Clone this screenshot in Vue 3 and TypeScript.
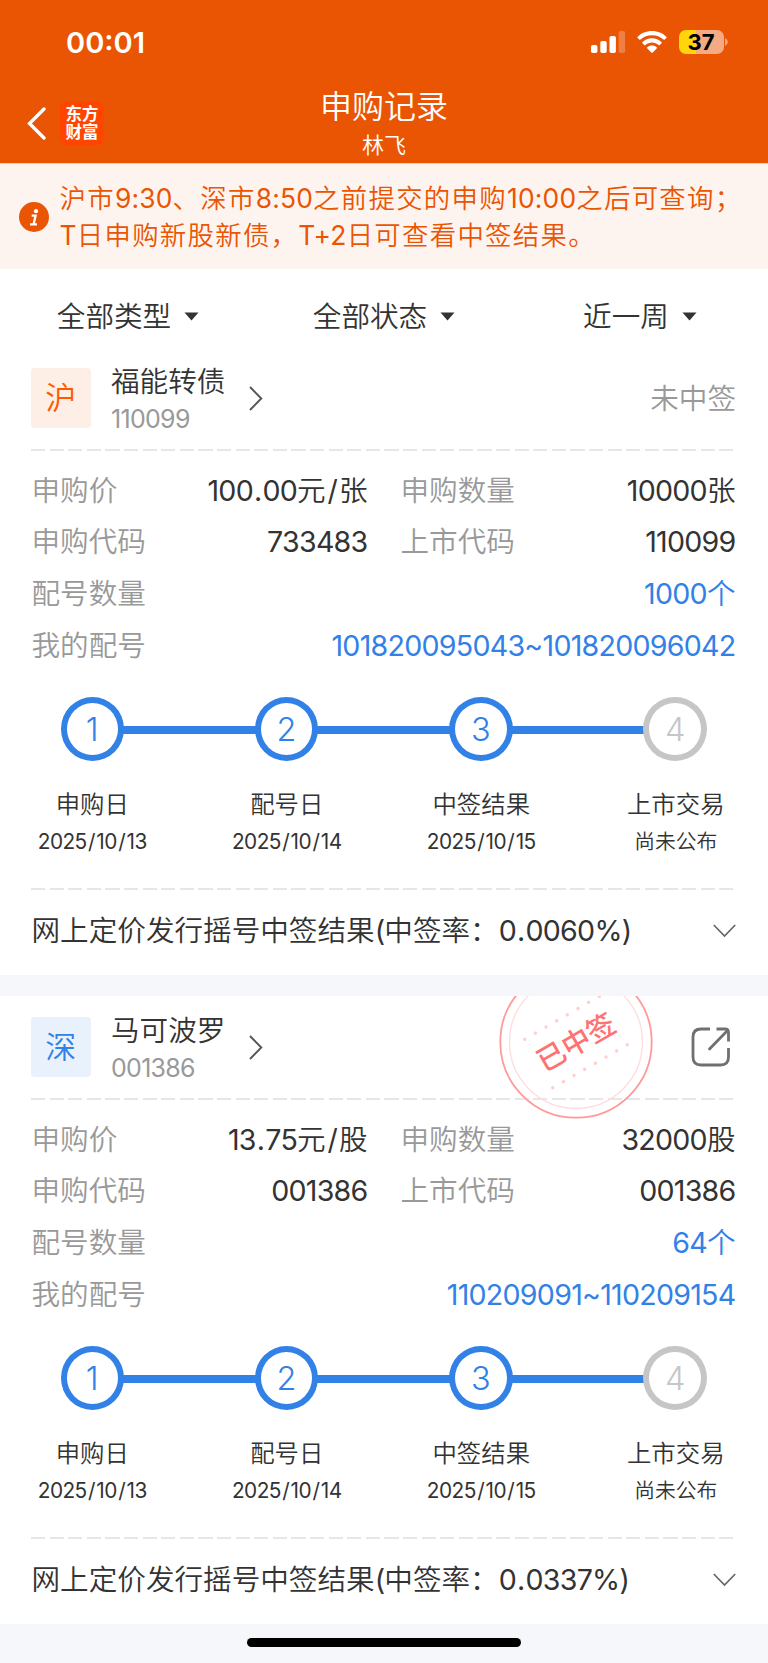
<script setup lang="ts">
import { h, type FunctionalComponent } from 'vue'

interface Step {
  label: string
  date: string
  done: boolean
}

interface RecordItem {
  market: string
  tone: 'orange' | 'blue'
  name: string
  code: string
  won: boolean
  price: string
  amount: string
  applyCode: string
  listCode: string
  count: string
  range: string
  rate: string
}

function runClass(run: string): string {
  if (run === '/') return 'latin slash'
  if (run === '.') return 'latin point'
  return /^[\x20-\x7e]/.test(run) ? 'latin' : 'han'
}

// Splits mixed text so digits, separators and ideographs can be tracked separately.
const Mixed: FunctionalComponent<{ text: string }> = (props) =>
  h(
    'span',
    { class: 'mixed' },
    (props.text.match(/[./]|[\x20-\x2d\x30-\x7e]+|[^\x20-\x7e]+/g) ?? []).map((run) =>
      h('span', { class: runClass(run) }, run),
    ),
  )
Mixed.props = ['text']

const notice: string[] = [
  '沪市9:30、深市8:50之前提交的申购10:00之后可查询；',
  'T日申购新股新债，T+2日可查看中签结果。',
]

const filters: string[] = ['全部类型', '全部状态', '近一周']

const steps: Step[] = [
  { label: '申购日', date: '2025/10/13', done: true },
  { label: '配号日', date: '2025/10/14', done: true },
  { label: '中签结果', date: '2025/10/15', done: true },
  { label: '上市交易', date: '尚未公布', done: false },
]

const records: RecordItem[] = [
  {
    market: '沪', tone: 'orange', name: '福能转债', code: '110099', won: false,
    price: '100.00元/张', amount: '10000张', applyCode: '733483', listCode: '110099',
    count: '1000个', range: '101820095043~101820096042', rate: '0.0060%',
  },
  {
    market: '深', tone: 'blue', name: '马可波罗', code: '001386', won: true,
    price: '13.75元/股', amount: '32000股', applyCode: '001386', listCode: '001386',
    count: '64个', range: '110209091~110209154', rate: '0.0337%',
  },
]

const dots: number[] = Array.from({ length: 8 }, (_, i) => -43 + i * 12.29)
</script>

<template>
  <div class="screen">
    <header class="top">
      <div class="status">
        <span class="clock">00:01</span>
        <div class="indicators">
          <svg class="signal" width="35" height="22" viewBox="0 0 35 22" fill="#fff">
            <rect x="0" y="14" width="6.4" height="8" rx="1.8" />
            <rect x="9.3" y="10" width="6.4" height="12" rx="1.8" />
            <rect x="18.5" y="5" width="6.4" height="17" rx="1.8" />
            <rect x="27.7" y="0" width="6.4" height="22" rx="1.8" opacity=".25" />
          </svg>
          <svg class="wifi" width="30" height="22" viewBox="0 0 30 22" fill="#fff">
            <path d="M15 0C20.700 0 25.800 2.200 29.300 5.700C29.700 6.100 29.700 6.500 29.400 6.900L27.700 8.600C27.400 8.900 26.900 8.900 26.500 8.600C23.400 5.700 19.400 4.200 15 4.200C10.600 4.200 6.600 5.700 3.500 8.600C3.100 8.900 2.600 8.900 2.300 8.600L.6 6.900C.3 6.500 .3 6.100 .7 5.700C4.200 2.200 9.300 0 15 0Z" />
            <path d="M15 7.300C18.700 7.300 22 8.700 24.500 11C24.900 11.400 24.900 11.800 24.500 12.200L22.700 14C22.400 14.300 21.900 14.300 21.600 14C19.800 12.400 17.500 11.500 15 11.500C12.500 11.500 10.200 12.400 8.400 14C8.100 14.300 7.600 14.300 7.300 14L5.500 12.200C5.100 11.800 5.100 11.400 5.500 11C8 8.700 11.300 7.300 15 7.300Z" />
            <path d="M15 14.600C16.800 14.600 18.400 15.200 19.700 16.300C20.100 16.700 20.100 17.100 19.700 17.500L15.700 21.500C15.300 21.900 14.700 21.900 14.300 21.500L10.300 17.500C9.900 17.100 9.900 16.700 10.300 16.300C11.600 15.200 13.200 14.600 15 14.600Z" />
          </svg>
          <div class="battery"><span>37</span></div>
          <svg class="nub" width="3" height="8" viewBox="0 0 3 8"><path d="M0 0Q2.800 1.500 2.800 4T0 8Z" fill="#f4aa82" /></svg>
        </div>
      </div>
      <div class="nav">
        <div class="nav-side">
          <svg class="back" width="19" height="33" viewBox="0 0 19 33">
            <path d="M17 2L2.500 16.500L17 31" fill="none" stroke="#fff" stroke-width="3.300" stroke-linecap="round" />
          </svg>
          <div class="logo"><span>东方</span><span>财富</span></div>
        </div>
        <div class="titles">
          <h1>申购记录</h1>
          <p>林飞</p>
        </div>
        <div class="nav-side"></div>
      </div>
    </header>

    <section class="notice">
      <svg class="info" width="30" height="30" viewBox="0 0 30 30">
        <circle cx="15" cy="15" r="15" fill="#ea5504" />
        <circle cx="17" cy="9.200" r="2.100" fill="#fff" />
        <path d="M12.700 13.600H16.600L14.600 22.300M11 22.300H18" fill="none" stroke="#fff" stroke-width="2.300" />
      </svg>
      <div class="notice-text">
        <p v-for="line in notice" :key="line"><Mixed :text="line" /></p>
      </div>
    </section>

    <nav class="filters">
      <div v-for="item in filters" :key="item" class="filter">
        <span>{{ item }}</span>
        <svg width="15" height="9" viewBox="0 0 15 9"><path d="M.5 .5H14.500L7.500 8.500Z" fill="#333" /></svg>
      </div>
    </nav>

    <main class="list">
      <article v-for="item in records" :key="item.code" class="card">
        <div class="card-head">
          <div class="badge" :class="item.tone">{{ item.market }}</div>
          <div class="ident">
            <span class="name">{{ item.name }}</span>
            <span class="code">{{ item.code }}</span>
          </div>
          <svg class="go" width="14" height="25" viewBox="0 0 14 25">
            <path d="M1 1L12.300 12.500L1 24" fill="none" stroke="#555" stroke-width="1.900" />
          </svg>
          <span v-if="!item.won" class="missed">未中签</span>
          <svg v-else class="share" width="40" height="40" viewBox="0 0 40 40" fill="none" stroke="#707070" stroke-width="2.800">
            <path d="M19 2H10Q2 2 2 10V30Q2 38 10 38H29.500Q37.500 38 37.500 30V21" />
            <path d="M25.500 2H34Q37.500 2 37.500 5.500V14.500" />
            <path d="M18.500 22L36.500 3.500" stroke-linecap="round" />
          </svg>
        </div>
        <div class="rule"></div>

        <dl class="facts">
          <div class="pair"><dt>申购价</dt><dd><Mixed :text="item.price" /></dd></div>
          <div class="pair"><dt>申购数量</dt><dd><Mixed :text="item.amount" /></dd></div>
          <div class="pair"><dt>申购代码</dt><dd><Mixed :text="item.applyCode" /></dd></div>
          <div class="pair"><dt>上市代码</dt><dd><Mixed :text="item.listCode" /></dd></div>
          <div class="pair wide"><dt>配号数量</dt><dd><Mixed :text="item.count" /></dd></div>
          <div class="pair wide"><dt>我的配号</dt><dd><Mixed :text="item.range" /></dd></div>
        </dl>

        <div class="rail">
          <template v-for="(step, i) in steps" :key="step.label">
            <i v-if="i > 0" class="link"></i>
            <b class="node" :class="{ pending: !step.done }">{{ i + 1 }}</b>
          </template>
        </div>
        <div class="captions">
          <div v-for="step in steps" :key="step.label" class="caption">
            <span class="step-name">{{ step.label }}</span>
            <span class="step-date"><Mixed :text="step.date" /></span>
          </div>
        </div>
        <div class="rule"></div>

        <div class="result">
          <Mixed :text="`网上定价发行摇号中签结果(中签率：${item.rate})`" />
          <svg width="23" height="14" viewBox="0 0 23 14">
            <path d="M.8 1L11.500 12L22.200 1" fill="none" stroke="#666" stroke-width="1.700" />
          </svg>
        </div>

        <svg v-if="item.won" class="stamp" width="156" height="156" viewBox="-78 -78 156 156">
          <circle r="75.700" fill="none" stroke="#ff9a9a" stroke-width="1.800" />
          <circle r="66.500" fill="none" stroke="#ffdcdc" stroke-width="1.300" />
          <g transform="rotate(-30)">
            <g fill="#ffcfcf">
              <circle v-for="x in dots" :key="`a${x}`" :cx="x" cy="-28" r="1.700" />
              <circle v-for="x in dots" :key="`b${x}`" :cx="x" cy="28" r="1.700" />
            </g>
            <text x="0" y="10.500" text-anchor="middle">已中签</text>
          </g>
        </svg>
      </article>
    </main>

    <footer class="home"><i></i></footer>
  </div>
</template>

<style>
body {
  margin: 0;
  background: #f6f7fa;
}
</style>

<style scoped>
.screen {
  width: 768px;
  height: 1663px;
  overflow: hidden;
  background: #fff;
  color: #333;
  font-family: Inter, "Noto Sans CJK SC", sans-serif;
  font-size: 28.6px;
  font-weight: 350;
  line-height: 1;
}
h1, p, dl, dt, dd { margin: 0; font-weight: inherit; }
svg { display: block; flex: none; }
.mixed { white-space: nowrap; }
.mixed :deep(.latin) { font-weight: 400; letter-spacing: -0.026em; }
.mixed :deep(.slash) { margin: 0 0.065em; }
.mixed :deep(.point) { margin: 0 0.035em; }

.top {
  height: 163px;
  border-bottom: 1px solid #f5cdb8;
  background: #ea5504;
  color: #fff;
}
.status {
  display: flex;
  justify-content: space-between;
  align-items: center;
  height: 84px;
  padding: 0 40px 0 66px;
}
.clock { font-size: 29px; font-weight: 600; }
.indicators { display: flex; align-items: center; }
.wifi { margin-left: 11px; }
.battery {
  width: 45px;
  height: 24px;
  margin-left: 12px;
  border-radius: 7px;
  background: linear-gradient(90deg, #ffd60a 17px, #f4aa82 17px);
  color: #000;
  font-size: 22px;
  font-weight: 700;
  line-height: 24px;
  text-align: center;
}
.nub { margin-left: 1.500px; }
.nav {
  display: grid;
  grid-template-columns: 1fr 160px 1fr;
  height: 79px;
}
.nav-side { display: flex; align-items: flex-start; padding-left: 27px; }
.back { margin-top: 23px; }
.logo {
  display: flex;
  flex-direction: column;
  justify-content: center;
  align-items: center;
  width: 44px;
  height: 44px;
  margin: 17px 0 0 14px;
  border-radius: 8px;
  background: #ff4500;
  font-size: 16.500px;
  font-weight: 700;
  line-height: 18.500px;
}
.titles { text-align: center; }
.titles h1 { font-size: 32px; line-height: 46px; }
.titles p { margin-top: -2px; font-size: 22px; line-height: 34px; }

.notice {
  display: flex;
  align-items: center;
  height: 105px;
  padding-left: 19px;
  background: #fef4ef;
  color: #ea5504;
}
.notice-text { margin-left: 10.500px; font-size: 26.400px; line-height: 37px; }
.notice-text :deep(.han) { letter-spacing: 1.300px; }
.notice-text :deep(.latin) { letter-spacing: 0.200px; }

.filters {
  display: grid;
  grid-template-columns: repeat(3, 1fr);
  height: 61px;
  padding: 17px 0 0;
  line-height: 61px;
}
.filter { display: flex; justify-content: center; align-items: center; gap: 13px; }

.list { display: flex; flex-direction: column; gap: 21px; background: #f6f7fa; }
.card {
  position: relative;
  height: 628px;
  overflow: hidden;
  background: #fff;
}
.card-head {
  display: flex;
  align-items: center;
  height: 102px;
  padding: 0 33px 0 31px;
}
.badge {
  width: 59.500px;
  height: 59.500px;
  border-radius: 4px;
  font-size: 31px;
  line-height: 59px;
  text-align: center;
}
.badge.orange { background: #fdeee6; color: #ff5a00; }
.badge.blue { background: #e9f1fc; color: #3281e6; }
.ident {
  display: flex;
  flex-direction: column;
  width: 137.500px;
  margin-left: 20.500px;
  padding-top: 4px;
}
.name { line-height: 38px; }
.code { color: #999; font-size: 25px; font-weight: 400; letter-spacing: -0.7px; line-height: 36px; }
.missed { margin: 2px -1px 0 auto; color: #999; }
.share { margin: 0 4.500px 0 auto; }

.rule {
  height: 2px;
  margin: 0 33px 0 31px;
  background: repeating-linear-gradient(90deg, #e6e6e6 0 14.200px, transparent 14.200px 18.600px);
}

.facts {
  display: grid;
  grid-template-columns: 336px 335px;
  grid-auto-rows: 51.700px;
  column-gap: 33px;
  padding: 13.500px 32.500px 0 31.500px;
  line-height: 51.700px;
}
.pair { display: flex; justify-content: space-between; }
.pair dt { color: #999; }
.wide { grid-column: 1 / -1; }
.wide dd { color: #3281e6; }

.rail {
  display: flex;
  align-items: center;
  height: 64px;
  padding: 0 61px 0 60.500px;
  margin-top: 26px;
}
.node {
  flex: none;
  box-sizing: border-box;
  width: 63.500px;
  height: 64px;
  border: 6px solid #3281e6;
  border-radius: 50%;
  color: #3281e6;
  font-size: 32.500px;
  font-weight: 350;
  line-height: 53px;
  text-align: center;
}
.node.pending { border-color: #c6c6c6; color: #c6c6c6; }
.link { flex: 1; height: 8.500px; margin: 1.500px -1px 0; background: #3281e6; }

.captions {
  display: grid;
  grid-template-columns: repeat(4, 194.500px);
  margin: 23px -5px 0;
  text-align: center;
}
.caption { display: flex; flex-direction: column; }
.step-name { font-size: 24.400px; line-height: 40px; }
.step-date { font-size: 20.800px; line-height: 36px; }
.captions + .rule { margin-top: 28px; }

.result {
  display: flex;
  justify-content: space-between;
  align-items: center;
  height: 81px;
  padding: 0 32.500px 0 31.500px;
}
.result > .mixed { padding-top: 2px; }

.stamp { position: absolute; left: 498.300px; top: -32.300px; }
.stamp text { fill: #ff7272; font-size: 28.500px; font-weight: 500; }

.home {
  display: flex;
  justify-content: center;
  height: 39px;
  background: #f6f7fa;
}
.home i {
  width: 274px;
  height: 9.500px;
  margin-top: 13.500px;
  border-radius: 5px;
  background: #000;
}
</style>
